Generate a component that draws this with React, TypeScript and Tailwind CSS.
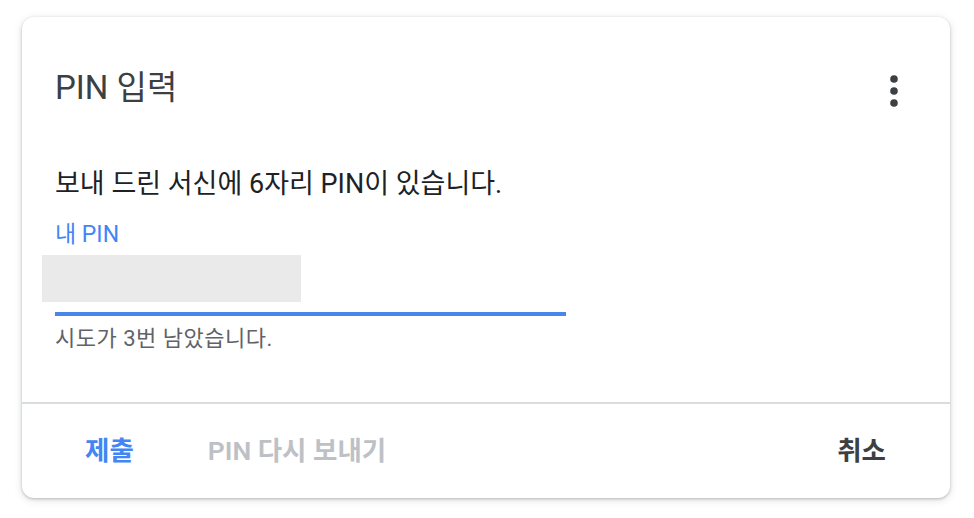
import React from 'react';

const font = "font-['Roboto','Noto_Sans_CJK_KR',sans-serif]";

const MoreIcon = () => (
  <svg width="24" height="32" viewBox="0 0 24 32" fill="#3c4043" className="mt-[6px]">
    <circle cx="12" cy="4" r="3.8" />
    <circle cx="12" cy="16" r="3.8" />
    <circle cx="12" cy="28" r="3.8" />
  </svg>
);

export default function App() {
  return (
    <div className={`w-[974px] h-[518px] bg-white pt-[17px] pl-[22px] ${font}`}>
      <div className="w-[928px] h-[481px] rounded-[12px] bg-white shadow-[0_1px_3px_rgba(60,64,67,0.3),0_2px_8px_rgba(60,64,67,0.15)] flex flex-col">
        <div className="flex items-center justify-between pl-[33px] pr-[44px] pt-[52px]">
          <h1 className="text-[33px] leading-[36px] text-[#3c4043]">PIN 입력</h1>
          <MoreIcon />
        </div>
        <div className="flex flex-col pl-[33px]">
          <p className="mt-[61px] text-[27px] leading-[32px] text-[#202124]">보내 드린 서신에 6자리 PIN이 있습니다.</p>
          <label className="mt-[21px] text-[23px] leading-[28px] text-[#4285f4]">내 PIN</label>
          <div className="mt-[6px] -ml-[13px] w-[259px] h-[47px] bg-[#eaeaea]" />
          <div className="mt-[10px] w-[511px] h-[4px] bg-[#4a86e8]" />
          <p className="mt-[10px] text-[22px] leading-[26px] tracking-[0.5px] text-[#5f6368]">시도가 3번 남았습니다.</p>
        </div>
        <div className="mt-[50px] h-[2px] bg-[#dadce0]" />
        <div className="flex-1 flex items-center justify-between pl-[63px] pr-[64px]">
          <div className="flex items-center gap-[74px]">
            <button className="text-[26.5px] leading-[32px] font-semibold text-[#4285f4]">제출</button>
            <button className="text-[26.5px] leading-[32px] font-semibold text-[#bdc1c6]">PIN 다시 보내기</button>
          </div>
          <button className="text-[26.5px] leading-[32px] font-semibold text-[#3c4043]">취소</button>
        </div>
      </div>
    </div>
  );
}
